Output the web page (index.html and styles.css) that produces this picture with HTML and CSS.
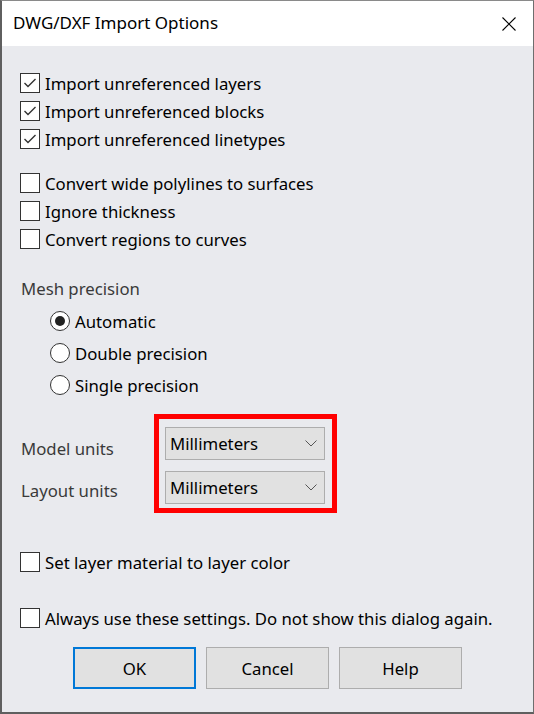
FILE: index.html
```html
<!DOCTYPE html>
<html>
<head>
<meta charset="utf-8">
<link rel="stylesheet" href="styles.css">
</head>
<body>
<div class="window">
  <div class="titlebar">
    <span class="title">DWG/DXF Import Options</span>
    <svg class="close" width="14" height="14" viewBox="0 0 14 14"><path d="M0.5 0.5 L13.5 13.5 M13.5 0.5 L0.5 13.5" stroke="#000" stroke-width="1.1" fill="none"/></svg>
  </div>
  <div class="content">
    <div class="group first">
      <div class="row"><span class="cb checked"><svg width="18" height="18" viewBox="0 0 18 18"><path d="M3.5 9 L7 12.5 L14.5 5" stroke="#333" stroke-width="1.4" fill="none"/></svg></span><span>Import unreferenced layers</span></div>
      <div class="row"><span class="cb checked"><svg width="18" height="18" viewBox="0 0 18 18"><path d="M3.5 9 L7 12.5 L14.5 5" stroke="#333" stroke-width="1.4" fill="none"/></svg></span><span>Import unreferenced blocks</span></div>
      <div class="row"><span class="cb checked"><svg width="18" height="18" viewBox="0 0 18 18"><path d="M3.5 9 L7 12.5 L14.5 5" stroke="#333" stroke-width="1.4" fill="none"/></svg></span><span>Import unreferenced linetypes</span></div>
    </div>
    <div class="group second">
      <div class="row"><span class="cb"></span><span>Convert wide polylines to surfaces</span></div>
      <div class="row"><span class="cb"></span><span>Ignore thickness</span></div>
      <div class="row"><span class="cb"></span><span>Convert regions to curves</span></div>
    </div>
    <div class="label mesh">Mesh precision</div>
    <div class="radios">
      <div class="rrow"><span class="radio on"></span><span>Automatic</span></div>
      <div class="rrow"><span class="radio"></span><span>Double precision</span></div>
      <div class="rrow"><span class="radio"></span><span>Single precision</span></div>
    </div>
    <div class="units">
      <div class="unit-labels">
        <div class="label">Model units</div>
        <div class="label">Layout units</div>
      </div>
      <div class="highlight">
        <div class="select"><span>Millimeters</span><svg width="12" height="7" viewBox="0 0 12 7"><path d="M0.5 0.5 L6 6 L11.5 0.5" stroke="#555" stroke-width="1" fill="none"/></svg></div>
        <div class="select"><span>Millimeters</span><svg width="12" height="7" viewBox="0 0 12 7"><path d="M0.5 0.5 L6 6 L11.5 0.5" stroke="#555" stroke-width="1" fill="none"/></svg></div>
      </div>
    </div>
    <div class="row material"><span class="cb"></span><span>Set layer material to layer color</span></div>
    <div class="row always"><span class="cb"></span><span>Always use these settings. Do not show this dialog again.</span></div>
    <div class="buttons">
      <div class="btn default">OK</div>
      <div class="btn">Cancel</div>
      <div class="btn">Help</div>
    </div>
  </div>
</div>
</body>
</html>
```

FILE: styles.css
```css
* { box-sizing: border-box; }
html, body { margin: 0; padding: 0; }
body {
  width: 534px;
  height: 714px;
  background: #e9eaee;
  font-family: "Noto Sans", "Open Sans", sans-serif;
  font-size: 16.75px;
  color: #000;
}
.window {
  width: 534px;
  height: 714px;
  border-left: 2px solid #5f5f5f;
  border-right: 1px solid #6e6e6e;
  border-bottom: 2px solid #5f5f5f;
  border-top: 1px solid #8a8a8a;
  background: #e9eaee;
  display: flex;
  flex-direction: column;
}
.titlebar {
  height: 45px;
  background: #fff;
  display: flex;
  align-items: center;
  justify-content: space-between;
  padding-left: 11px;
  padding-right: 17px;
  flex: none;
}
.title { font-size: 17px; margin-top: -2px; }
.close { display: block; margin-top: 1px; }
.content {
  padding-left: 18px;
  display: flex;
  flex-direction: column;
}
.group { display: flex; flex-direction: column; }
.group.first { margin-top: 23px; }
.group.second { margin-top: 16px; }
.row {
  height: 28px;
  display: flex;
  align-items: center;
  gap: 5px;
  white-space: nowrap;
}
.cb {
  width: 20px;
  height: 20px;
  border: 1px solid #333;
  background: #fff;
  display: flex;
  align-items: center;
  justify-content: center;
  flex: none;
}
.cb svg { display: block; }
.label { color: #3a3a3a; height: 28px; display: flex; align-items: center; padding-left: 1px; }
.mesh { margin-top: 21px; }
.radios { display: flex; flex-direction: column; margin-top: 3px; padding-left: 30px; }
.rrow { height: 32px; display: flex; align-items: center; gap: 5px; }
.radio {
  width: 20px;
  height: 20px;
  border: 1px solid #333;
  border-radius: 50%;
  background: #fff;
  display: flex;
  align-items: center;
  justify-content: center;
  flex: none;
}
.radio.on::after {
  content: "";
  width: 10px;
  height: 10px;
  border-radius: 50%;
  background: #222;
}
.units { display: flex; margin-top: 13px; }
.unit-labels {
  width: 134px;
  display: flex;
  flex-direction: column;
  gap: 14px;
  padding-top: 20px;
}
.highlight {
  border: 5px solid #ff0000;
  width: 183px;
  height: 99px;
  padding: 8px 7px 0 6px;
  display: flex;
  flex-direction: column;
  gap: 11px;
}
.select {
  height: 33px;
  background: #e1e1e1;
  border: 1px solid #adadad;
  display: flex;
  align-items: center;
  justify-content: space-between;
  padding-left: 4px;
  padding-right: 7px;
}
.select svg { display: block; }
.material { margin-top: 35px; }
.always { margin-top: 28px; }
.buttons {
  display: flex;
  gap: 10px;
  margin-top: 15px;
  padding-left: 53px;
}
.btn {
  width: 123px;
  height: 42px;
  background: #e1e1e1;
  border: 1px solid #adadad;
  display: flex;
  align-items: center;
  justify-content: center;
}
.btn.default { border: 2px solid #0078d7; }
```
